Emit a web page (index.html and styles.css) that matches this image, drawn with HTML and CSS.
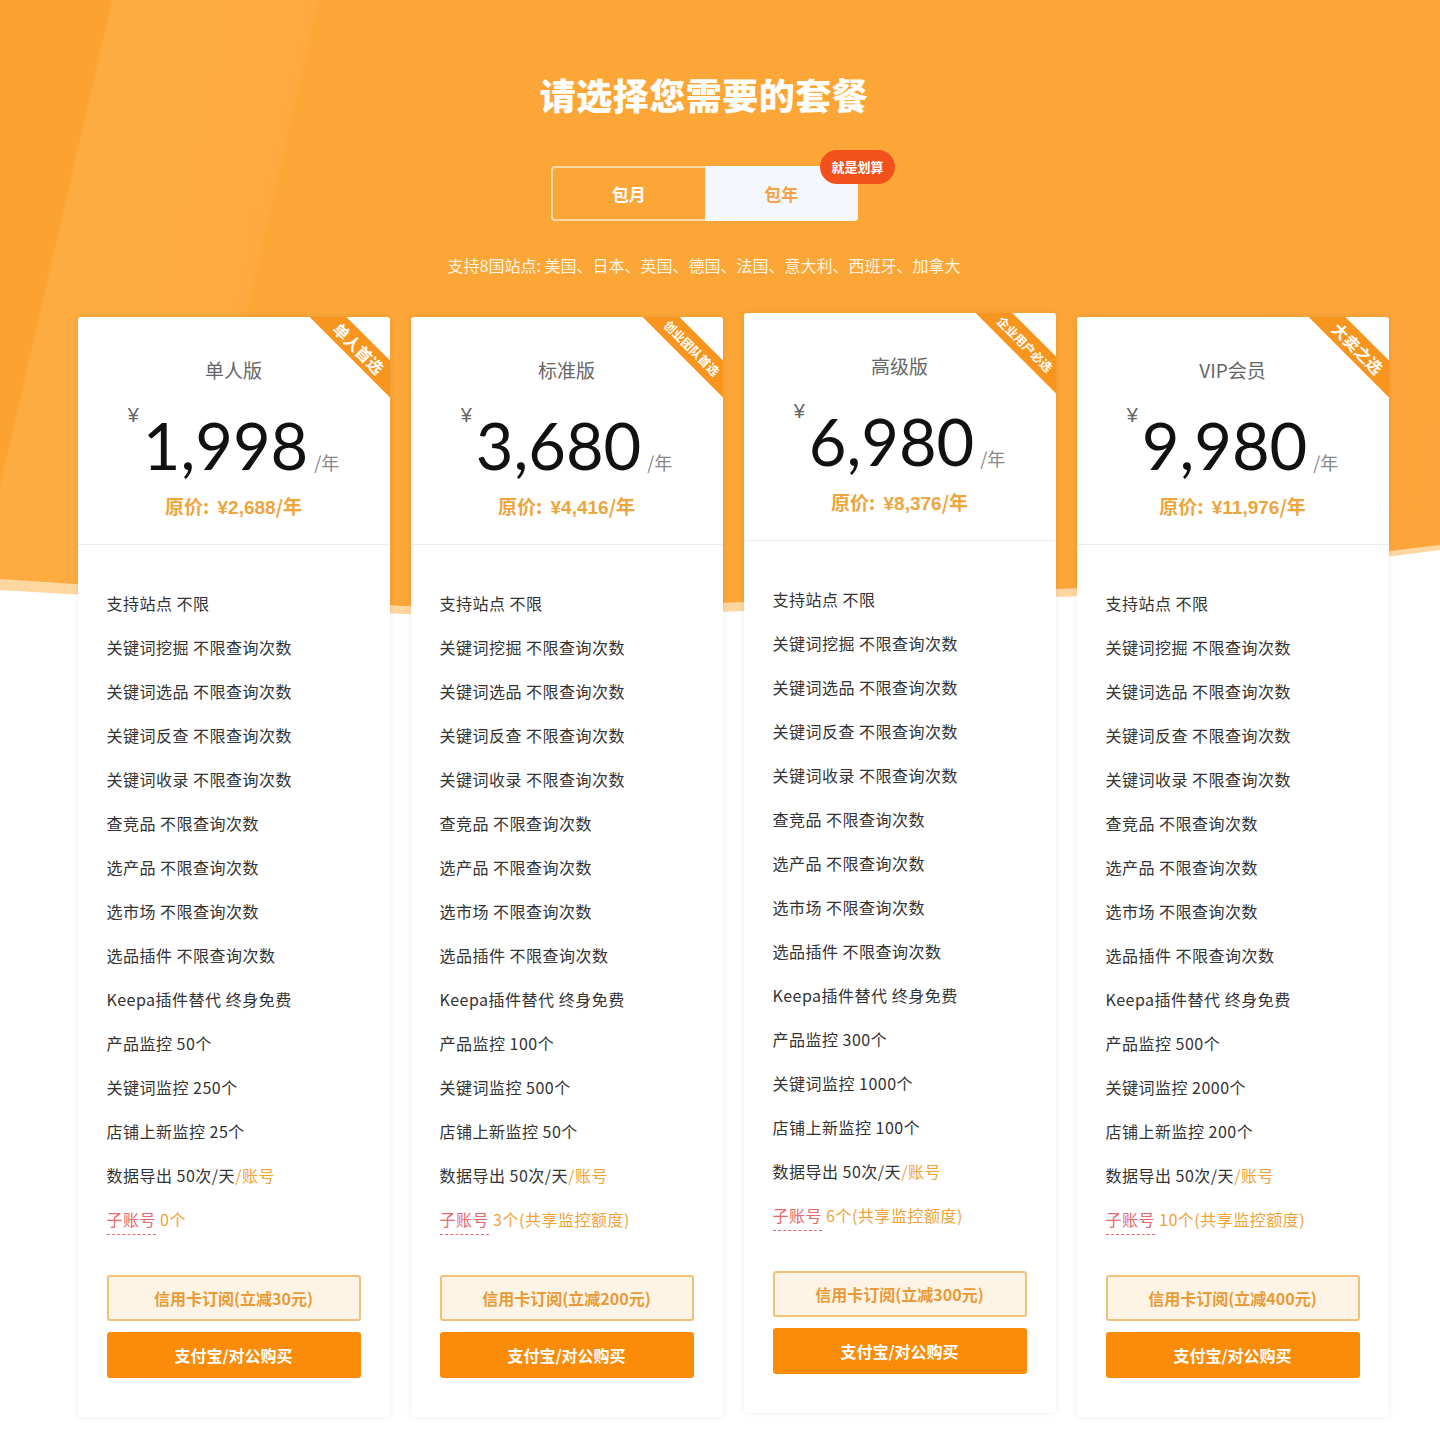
FILE: index.html
```html
<!DOCTYPE html>
<html lang="zh-CN">
<head>
    <meta charset="UTF-8">
    <title>选择套餐</title>
    <link rel="stylesheet" href="styles.css">
</head>
<body>
    <div class="page">
        <div class="head">
            <h1 class="title">请选择您需要的套餐</h1>

            <div class="toggle">
                <a href="#" class="toggle-item">包月</a>
                <a href="#" class="toggle-item active">包年</a>
                <span class="toggle-badge">就是划算</span>
            </div>

            <p class="sites">支持8国站点: 美国、日本、英国、德国、法国、意大利、西班牙、加拿大</p>
        </div>

        <div class="plans">
            <div class="card">
                <div class="ribbon">单人首选</div>
                <div class="card-head">
                    <div class="plan-name">单人版</div>
                    <div class="price"><span class="yen">¥</span><span class="amount">1,998</span><span class="unit">/年</span></div>
                    <div class="old-price">原价: <span class="num">¥2,688</span>/年</div>
                </div>
                <ul class="features">
                    <li>支持站点 不限</li>
                    <li>关键词挖掘 不限查询次数</li>
                    <li>关键词选品 不限查询次数</li>
                    <li>关键词反查 不限查询次数</li>
                    <li>关键词收录 不限查询次数</li>
                    <li>查竞品 不限查询次数</li>
                    <li>选产品 不限查询次数</li>
                    <li>选市场 不限查询次数</li>
                    <li>选品插件 不限查询次数</li>
                    <li>Keepa插件替代 终身免费</li>
                    <li>产品监控 50个</li>
                    <li>关键词监控 250个</li>
                    <li>店铺上新监控 25个</li>
                    <li>数据导出 50次/天<span class="hl">/账号</span></li>
                    <li><span class="sub">子账号</span> <span class="hl">0个</span></li>
                </ul>
                <div class="actions">
                    <a href="#" class="btn btn-outline">信用卡订阅(立减30元)</a>
                    <a href="#" class="btn btn-solid">支付宝/对公购买</a>
                </div>
            </div>

            <div class="card">
                <div class="ribbon small">创业团队首选</div>
                <div class="card-head">
                    <div class="plan-name">标准版</div>
                    <div class="price"><span class="yen">¥</span><span class="amount">3,680</span><span class="unit">/年</span></div>
                    <div class="old-price">原价: <span class="num">¥4,416</span>/年</div>
                </div>
                <ul class="features">
                    <li>支持站点 不限</li>
                    <li>关键词挖掘 不限查询次数</li>
                    <li>关键词选品 不限查询次数</li>
                    <li>关键词反查 不限查询次数</li>
                    <li>关键词收录 不限查询次数</li>
                    <li>查竞品 不限查询次数</li>
                    <li>选产品 不限查询次数</li>
                    <li>选市场 不限查询次数</li>
                    <li>选品插件 不限查询次数</li>
                    <li>Keepa插件替代 终身免费</li>
                    <li>产品监控 100个</li>
                    <li>关键词监控 500个</li>
                    <li>店铺上新监控 50个</li>
                    <li>数据导出 50次/天<span class="hl">/账号</span></li>
                    <li><span class="sub">子账号</span> <span class="hl">3个(共享监控额度)</span></li>
                </ul>
                <div class="actions">
                    <a href="#" class="btn btn-outline">信用卡订阅(立减200元)</a>
                    <a href="#" class="btn btn-solid">支付宝/对公购买</a>
                </div>
            </div>

            <div class="card raised">
                <div class="ribbon small">企业用户必选</div>
                <div class="card-head">
                    <div class="plan-name">高级版</div>
                    <div class="price"><span class="yen">¥</span><span class="amount">6,980</span><span class="unit">/年</span></div>
                    <div class="old-price">原价: <span class="num">¥8,376</span>/年</div>
                </div>
                <ul class="features">
                    <li>支持站点 不限</li>
                    <li>关键词挖掘 不限查询次数</li>
                    <li>关键词选品 不限查询次数</li>
                    <li>关键词反查 不限查询次数</li>
                    <li>关键词收录 不限查询次数</li>
                    <li>查竞品 不限查询次数</li>
                    <li>选产品 不限查询次数</li>
                    <li>选市场 不限查询次数</li>
                    <li>选品插件 不限查询次数</li>
                    <li>Keepa插件替代 终身免费</li>
                    <li>产品监控 300个</li>
                    <li>关键词监控 1000个</li>
                    <li>店铺上新监控 100个</li>
                    <li>数据导出 50次/天<span class="hl">/账号</span></li>
                    <li><span class="sub">子账号</span> <span class="hl">6个(共享监控额度)</span></li>
                </ul>
                <div class="actions">
                    <a href="#" class="btn btn-outline">信用卡订阅(立减300元)</a>
                    <a href="#" class="btn btn-solid">支付宝/对公购买</a>
                </div>
            </div>

            <div class="card">
                <div class="ribbon">大卖之选</div>
                <div class="card-head">
                    <div class="plan-name">VIP会员</div>
                    <div class="price"><span class="yen">¥</span><span class="amount">9,980</span><span class="unit">/年</span></div>
                    <div class="old-price">原价: <span class="num">¥11,976</span>/年</div>
                </div>
                <ul class="features">
                    <li>支持站点 不限</li>
                    <li>关键词挖掘 不限查询次数</li>
                    <li>关键词选品 不限查询次数</li>
                    <li>关键词反查 不限查询次数</li>
                    <li>关键词收录 不限查询次数</li>
                    <li>查竞品 不限查询次数</li>
                    <li>选产品 不限查询次数</li>
                    <li>选市场 不限查询次数</li>
                    <li>选品插件 不限查询次数</li>
                    <li>Keepa插件替代 终身免费</li>
                    <li>产品监控 500个</li>
                    <li>关键词监控 2000个</li>
                    <li>店铺上新监控 200个</li>
                    <li>数据导出 50次/天<span class="hl">/账号</span></li>
                    <li><span class="sub">子账号</span> <span class="hl">10个(共享监控额度)</span></li>
                </ul>
                <div class="actions">
                    <a href="#" class="btn btn-outline">信用卡订阅(立减400元)</a>
                    <a href="#" class="btn btn-solid">支付宝/对公购买</a>
                </div>
            </div>
        </div>
    </div>
</body>
</html>
```

FILE: styles.css
```css
body {
    margin: 0;
    padding: 0;
    background-color: #fff;
    font-family: "Noto Sans CJK SC", "Noto Sans", sans-serif;
    color: #333;
}
.page {
    position: relative;
    padding: 72px 0 22px;
    text-align: center;
    z-index: 0;
}
/* orange backdrop with wavy bottom edge */
.page::before,
.page::after {
    content: "";
    position: absolute;
    left: 0;
    right: 0;
    top: 0;
    z-index: -1;
}
.page::before {
    height: 620px;
    background-color: #fed6a0;
    clip-path: polygon(0 0, 100% 0, 100% 550px, 75% 596px, 50% 612px, 28% 614px, 0 590px);
}
.page::after {
    height: 610px;
    background: linear-gradient(103deg, #fba231 0, #fba231 7%, #fdac42 7.2%, #fdab40 20%, #fca637 20.3%, #fca637 58%, #fda53a 100%);
    clip-path: polygon(0 0, 100% 0, 100% 545px, 75% 588px, 50% 603px, 28% 606px, 0 579px);
}
.head {
    padding-right: 32px;
}
.title {
    margin: 0;
    font-size: 36px;
    line-height: 44px;
    font-weight: 900;
    color: #fff;
    letter-spacing: 0.5px;
}
.toggle {
    position: relative;
    display: flex;
    width: 307px;
    height: 55px;
    margin: 50px auto 0;
}
.toggle-item {
    flex: 1;
    display: flex;
    align-items: center;
    justify-content: center;
    font-size: 17px;
    font-weight: 700;
    color: #fff;
    text-decoration: none;
    border: 2px solid #fdd9a6;
    border-right: none;
    border-radius: 4px 0 0 4px;
}
.toggle-item.active {
    background-color: #f4f7fb;
    color: #f1a24a;
    border: none;
    border-radius: 0 4px 4px 0;
}
.toggle-badge {
    position: absolute;
    right: -37px;
    top: -16px;
    padding: 0 11px;
    height: 34px;
    line-height: 34px;
    border-radius: 17px;
    background-color: #f2511b;
    color: #fff;
    font-size: 13px;
    font-weight: 700;
}
.sites {
    margin: 33px 0 0;
    font-size: 16px;
    line-height: 22px;
    color: #fff4e0;
}
.plans {
    display: flex;
    justify-content: center;
    gap: 21px;
    margin-top: 41px;
    padding-left: 26px;
}
.card {
    position: relative;
    width: 312px;
    background-color: #fff;
    border-radius: 3px;
    box-shadow: 0 0 6px rgba(0, 0, 0, 0.08);
    overflow: hidden;
    text-align: left;
}
.card.raised {
    margin-top: -4px;
    margin-bottom: 4px;
}
.ribbon {
    position: absolute;
    top: 18px;
    right: -49px;
    width: 160px;
    height: 26px;
    line-height: 26px;
    background-color: #f8951f;
    color: #fff;
    font-size: 16px;
    font-weight: 700;
    text-align: center;
    transform: rotate(45deg);
}
.ribbon.small {
    font-size: 12px;
}
.card-head {
    padding: 40px 0 24px;
    text-align: center;
    border-bottom: 1px solid #eee;
}
.plan-name {
    font-size: 19px;
    line-height: 26px;
    color: #666;
}
.price {
    display: flex;
    justify-content: center;
    align-items: flex-end;
    margin-top: 22px;
    height: 72px;
}
.yen {
    align-self: flex-start;
    font-family: "Liberation Sans", sans-serif;
    font-size: 20px;
    line-height: 20px;
    color: #666;
    margin-right: 4px;
}
.amount {
    font-family: Lato, "Open Sans", sans-serif;
    font-size: 65px;
    line-height: 64px;
    color: #111;
}
.unit {
    font-size: 18px;
    line-height: 30px;
    color: #888;
    margin-left: 6px;
}
.old-price {
    margin-top: 17px;
    font-size: 19px;
    line-height: 24px;
    font-weight: 700;
    color: #eda53d;
}
.old-price .num {
    font-family: "Liberation Sans", sans-serif;
    margin-left: 4px;
}
.features {
    list-style: none;
    margin: 0;
    padding: 48px 29px 0;
    display: flex;
    flex-direction: column;
    gap: 24px;
}
.features li {
    font-size: 16px;
    line-height: 20px;
    letter-spacing: 0.5px;
    color: #333;
}
.hl {
    color: #f0a237;
}
.sub {
    color: #e4686e;
    border-bottom: 1px dashed #e4686e;
    padding-bottom: 3px;
}
.actions {
    display: flex;
    flex-direction: column;
    gap: 11px;
    padding: 46px 29px 39px;
}
.btn {
    display: block;
    height: 46px;
    line-height: 46px;
    border-radius: 3px;
    text-align: center;
    text-decoration: none;
    font-size: 16px;
    font-weight: 700;
    box-sizing: border-box;
}
.btn-outline {
    background-color: #fdf4e5;
    border: 2px solid #f1c179;
    line-height: 42px;
    color: #e99a36;
}
.btn-solid {
    background-color: #fa8c0a;
    color: #fff;
}
```
